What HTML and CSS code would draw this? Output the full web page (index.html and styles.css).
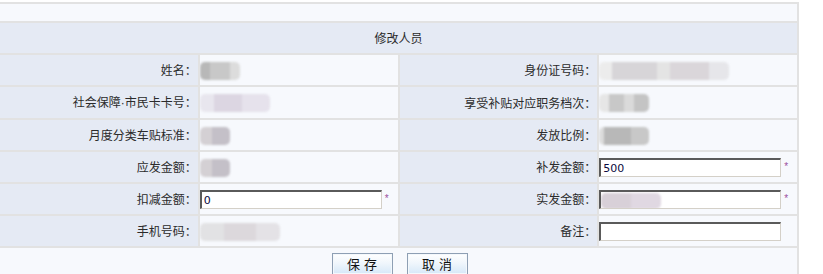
FILE: index.html
```html
<!DOCTYPE html>
<html lang="zh-CN">
<head>
<meta charset="utf-8">
<title>修改人员</title>
<link rel="stylesheet" href="styles.css">
</head>
<body>
<table class="form">
  <tr class="top"><td colspan="4"></td></tr>
  <tr class="head"><td colspan="4">修改人员</td></tr>
  <tr>
    <td class="lbl">姓名：</td>
    <td class="val"><span class="blur b-name"></span></td>
    <td class="lbl">身份证号码：</td>
    <td class="val"><span class="blur b-id"></span></td>
  </tr>
  <tr>
    <td class="lbl">社会保障<span class="dot">·</span>市民卡卡号：</td>
    <td class="val"><span class="blur b-card"></span></td>
    <td class="lbl">享受补贴对应职务档次：</td>
    <td class="val"><span class="blur b-level"></span></td>
  </tr>
  <tr>
    <td class="lbl">月度分类车贴标准：</td>
    <td class="val"><span class="blur b-small"></span></td>
    <td class="lbl">发放比例：</td>
    <td class="val"><span class="blur b-ratio"></span></td>
  </tr>
  <tr>
    <td class="lbl">应发金额：</td>
    <td class="val"><span class="blur b-small"></span></td>
    <td class="lbl">补发金额：</td>
    <td class="val"><input class="txt" type="text" value="500"><span class="req">*</span></td>
  </tr>
  <tr>
    <td class="lbl">扣减金额：</td>
    <td class="val"><input class="txt" type="text" value="0"><span class="req">*</span></td>
    <td class="lbl">实发金额：</td>
    <td class="val"><span class="field"><span class="blur b-real"></span></span><span class="req">*</span></td>
  </tr>
  <tr>
    <td class="lbl">手机号码：</td>
    <td class="val"><span class="blur b-phone"></span></td>
    <td class="lbl">备注：</td>
    <td class="val"><input class="txt" type="text" value=""></td>
  </tr>
  <tr class="foot">
    <td colspan="4">
      <div class="btns">
        <button class="btn" type="button">保存</button>
        <button class="btn" type="button">取消</button>
      </div>
    </td>
  </tr>
</table>
</body>
</html>
```

FILE: styles.css
```css
html, body {
  margin: 0;
  padding: 0;
  background: #ffffff;
}

body {
  font-family: "Noto Sans CJK SC", "Liberation Sans", sans-serif;
  font-size: 12px;
  color: #2b2b2b;
}

.form {
  border-collapse: separate;
  border-spacing: 2px;
  background: #e2e2e2;
  width: 801px;
  margin: 2px 0 0 -2px;
  table-layout: fixed;
}

.form td {
  padding: 0;
  height: 30px;
  line-height: 30px;
  white-space: nowrap;
  overflow: hidden;
}

.form .top td {
  height: 17px;
  background: #f7f9fd;
}

.form .head td {
  background: #e5eaf4;
  text-align: center;
}

.lbl {
  width: 198px;
  background: #e5eaf4;
  text-align: right;
  padding-right: 1px !important;
  box-sizing: border-box;
}

.dot {
  font-family: "Liberation Sans", sans-serif;
}

.val {
  background: #f7f9fd;
  text-align: left;
}

.blur {
  display: inline-block;
  vertical-align: middle;
  height: 18px;
  border-radius: 5px;
  filter: blur(1px);
  margin-top: -2px;
}

.b-name { width: 40px; background: linear-gradient(90deg, #b8b8b8 0 25%, #c8c8c8 25% 75%, #dcdcdc 75%); }
.b-id { width: 130px; background: linear-gradient(90deg, #ececec 0 10%, #d7d5d8 10% 45%, #e4e4e4 45% 55%, #dad6da 55% 85%, #e6e6ea 85%); }
.b-card { width: 70px; background: linear-gradient(90deg, #e8e6ee 0 20%, #dcd6e2 20% 60%, #e6e2ec 60%); }
.b-level { width: 50px; background: linear-gradient(90deg, #e6e6e6 0 20%, #c8c8c8 20% 50%, #dadada 50% 70%, #c4c4c4 70%); }
.b-small { width: 30px; background: linear-gradient(90deg, #d4d0d4 0 40%, #c4c0c8 40%); }
.b-ratio { width: 50px; background: linear-gradient(90deg, #dcdcdc 0 10%, #b8b8b8 10% 65%, #c8c8c8 65%); }
.b-phone { width: 80px; background: linear-gradient(90deg, #e2e2e4 0 30%, #dcd8dc 30% 70%, #e4e2e6 70%); }
.b-real { width: 60px; height: 16px; margin-top: 1px; background: linear-gradient(90deg, #d8d0d8 0 50%, #e0d8e2 50%); }

.txt, .field {
  display: inline-block;
  vertical-align: middle;
  box-sizing: border-box;
  width: 182px;
  height: 19px;
  margin: -2px 0 0 0;
  padding: 0 2px;
  border-style: solid;
  border-width: 2px 1px 1px 2px;
  border-color: #5a5a5a #d4d0c8 #d4d0c8 #5a5a5a;
  background: #ffffff;
  font-family: "DejaVu Sans", sans-serif;
  font-size: 11px;
  color: #0a0a40;
  line-height: 15px;
  outline: none;
}

.field {
  padding: 0;
  overflow: hidden;
}

.req {
  display: inline-block;
  vertical-align: middle;
  margin: -4px 0 0 3px;
  font-family: "Liberation Sans", sans-serif;
  font-size: 10px;
  color: #9a4f9e;
}

.foot td {
  background: #f7f9fd;
  height: 28px;
  line-height: normal;
}

.btns {
  display: flex;
  justify-content: center;
  gap: 14px;
  padding-top: 3px;
  padding-left: 2px;
}

.btn {
  width: 61px;
  height: 22px;
  box-sizing: border-box;
  border: 1px solid #8e9fb4;
  box-shadow: inset 0 0 0 1px #f4f8fc;
  background: linear-gradient(#ffffff 0%, #f0f6fc 45%, #d6e8f8 100%);
  font-family: "Noto Sans CJK SC", sans-serif;
  font-size: 13px;
  letter-spacing: 4px;
  text-indent: 4px;
  color: #111;
  padding: 0;
  line-height: 18px;
  cursor: pointer;
}
```
